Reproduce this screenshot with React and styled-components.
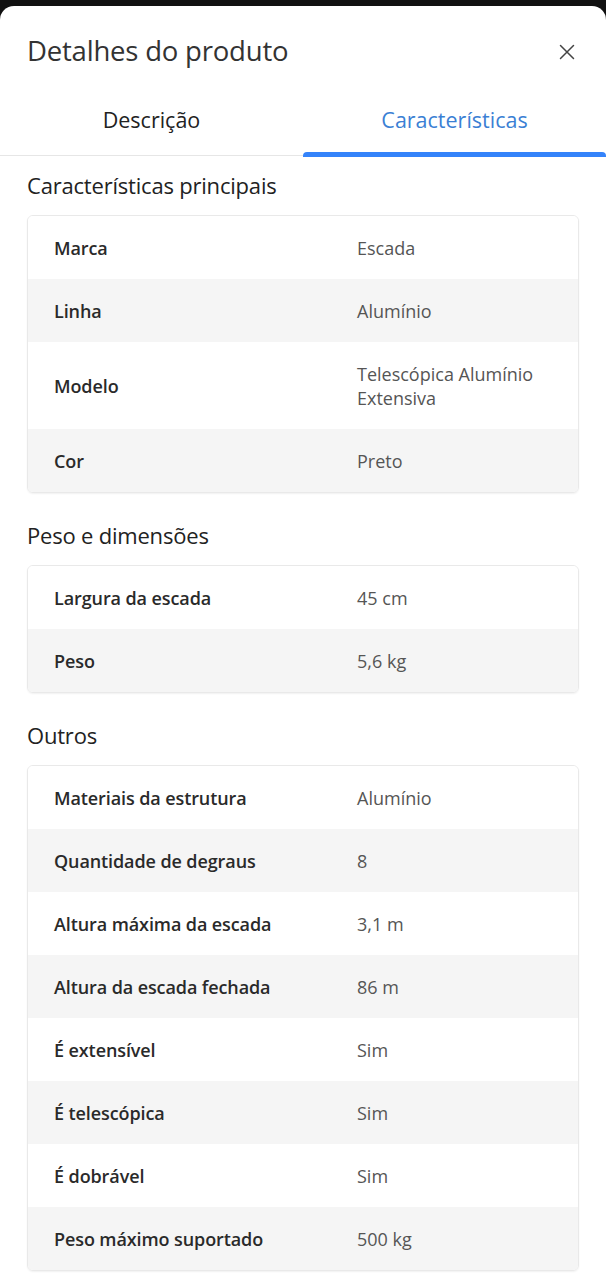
import React from "react";
import styled, { createGlobalStyle } from "styled-components";

const Global = createGlobalStyle`
  html, body { margin: 0; padding: 0; background: #111; }
  body { font-family: "Open Sans", "Lato", sans-serif; -webkit-font-smoothing: antialiased; }
  * { box-sizing: border-box; }
`;

const Sheet = styled.div`
  margin-top: 6px;
  background: #fff;
  border-radius: 14px 14px 0 0;
  min-height: 1274px;
`;

const Header = styled.header`
  height: 82px;
  display: flex;
  align-items: center;
  justify-content: space-between;
  padding: 0 27px;
`;

const Title = styled.h1`
  margin: 0;
  font-size: 27.5px;
  line-height: 34px;
  font-weight: 400;
  color: #333;
  padding-top: 8px;
  letter-spacing: -0.2px;
`;

const Close = styled.button`
  border: 0;
  background: none;
  padding: 0;
  width: 24px;
  height: 24px;
  margin-top: 10px;
  display: flex;
  align-items: center;
  justify-content: center;
  color: #444;
`;

const Tabs = styled.nav`
  display: flex;
  height: 68px;
  border-bottom: 1px solid #e6e6e6;
`;

const Tab = styled.div`
  flex: 1;
  display: flex;
  align-items: center;
  justify-content: center;
  font-size: 21.5px;
  color: ${(p) => (p.$active ? "#3b7fd4" : "#222")};
  position: relative;
  padding-bottom: 4px;
  &::after {
    content: "";
    display: ${(p) => (p.$active ? "block" : "none")};
    position: absolute;
    left: 0;
    right: 0;
    bottom: -2px;
    height: 5px;
    border-radius: 4px 4px 0 0;
    background: #3483fa;
  }
`;

const Content = styled.main`
  padding: 0 27px 20px;
`;

const SectionTitle = styled.h2`
  margin: ${(p) => (p.$first ? "14px" : "27px")} 0 15px;
  font-size: 22px;
  line-height: 30px;
  font-weight: 400;
  color: #222;
  letter-spacing: -0.2px;
`;

const Card = styled.div`
  border: 1px solid #e9e9e9;
  border-radius: 6px;
  overflow: hidden;
  box-shadow: 0 1px 2px rgba(0, 0, 0, 0.06);
`;

const Row = styled.div`
  display: grid;
  grid-template-columns: 303px 1fr;
  align-items: center;
  min-height: 63px;
  padding: 19.5px 26px;
  background: ${(p) => (p.$alt ? "#f5f5f5" : "#fff")};
  font-size: 18px;
  line-height: 24px;
`;

const Label = styled.span`
  color: #2a2a2a;
  font-weight: 600;
  letter-spacing: -0.1px;
`;

const Value = styled.span`
  color: #555;
  padding-right: 6px;
`;

const sections = [
  {
    title: "Características principais",
    rows: [
      ["Marca", "Escada"],
      ["Linha", "Alumínio"],
      ["Modelo", "Telescópica Alumínio Extensiva"],
      ["Cor", "Preto"],
    ],
  },
  {
    title: "Peso e dimensões",
    rows: [
      ["Largura da escada", "45 cm"],
      ["Peso", "5,6 kg"],
    ],
  },
  {
    title: "Outros",
    rows: [
      ["Materiais da estrutura", "Alumínio"],
      ["Quantidade de degraus", "8"],
      ["Altura máxima da escada", "3,1 m"],
      ["Altura da escada fechada", "86 m"],
      ["É extensível", "Sim"],
      ["É telescópica", "Sim"],
      ["É dobrável", "Sim"],
      ["Peso máximo suportado", "500 kg"],
    ],
  },
];

export default function App() {
  return (
    <>
      <Global />
      <Sheet>
        <Header>
          <Title>Detalhes do produto</Title>
          <Close aria-label="Fechar">
            <svg width="16" height="16" viewBox="0 0 16 16" fill="none" stroke="currentColor" strokeWidth="1.5" strokeLinecap="round">
              <path d="M1.5 1.5L14.5 14.5M14.5 1.5L1.5 14.5" />
            </svg>
          </Close>
        </Header>
        <Tabs>
          <Tab>Descrição</Tab>
          <Tab $active>Características</Tab>
        </Tabs>
        <Content>
          {sections.map((s, i) => (
            <section key={s.title}>
              <SectionTitle $first={i === 0}>{s.title}</SectionTitle>
              <Card>
                {s.rows.map(([k, v], j) => (
                  <Row key={k} $alt={j % 2 === 1}>
                    <Label>{k}</Label>
                    <Value>{v}</Value>
                  </Row>
                ))}
              </Card>
            </section>
          ))}
        </Content>
      </Sheet>
    </>
  );
}
